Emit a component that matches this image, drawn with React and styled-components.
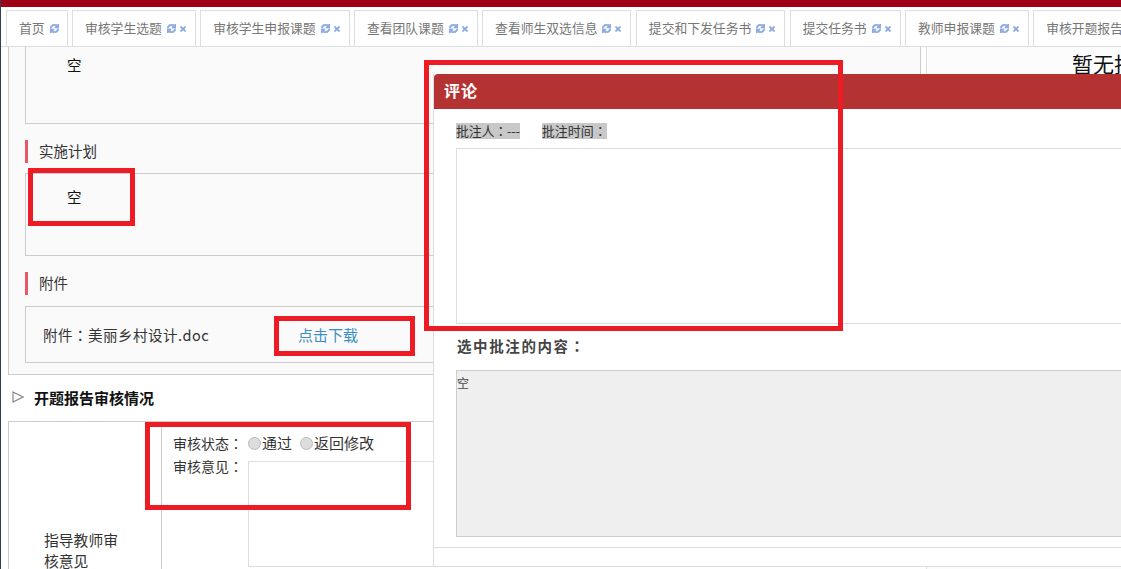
import React from "react";
import styled, { createGlobalStyle } from "styled-components";
import { FaSync, FaTimes } from "react-icons/fa";

const GlobalStyle = createGlobalStyle`
  html, body {
    margin: 0;
    padding: 0;
    background: #fff;
    overflow: hidden;
  }
  * {
    box-sizing: border-box;
  }
`;

const Page = styled.div`
  position: relative;
  width: 1121px;
  height: 569px;
  overflow: hidden;
  border-left: 1px solid #2f4050;
  background: #fff;
  color: #333;
  font-family: "Noto Sans CJK SC", "Noto Sans", sans-serif;
  font-size: 14.5px;
`;

const TopBar = styled.div`
  height: 7px;
  background: #a00016;
`;

const TabBar = styled.div`
  display: flex;
  gap: 4.4px;
  height: 40px;
  padding: 3px 0 0 5px;
  border-bottom: 1px solid #ddd;
  overflow: hidden;
`;

const Tab = styled.div`
  flex: 0 0 auto;
  display: flex;
  align-items: center;
  height: 37px;
  padding: 0 8px 3px 12px;
  border: 1px solid #ddd;
  border-bottom: none;
  background: #fff;
  color: #777;
  font-size: 12.8px;
  white-space: nowrap;
`;

const Refresh = styled(FaSync)`
  margin: 2px 0 0 5px;
  width: 9px;
  height: 9px;
  color: #8dabe3;
  stroke: currentColor;
  stroke-width: 50;
`;

const Close = styled(FaTimes)`
  margin: 2px 0 0 3px;
  width: 8px;
  height: 8px;
  color: #8dabe3;
  stroke: currentColor;
  stroke-width: 40;
`;

const Main = styled.div`
  display: flex;
  gap: 5px;
  width: 1500px;
`;

const LeftColumn = styled.div`
  flex: 0 0 920px;
`;

const DetailPanel = styled.div`
  margin-left: 7px;
  padding: 0 0 11px 16px;
  border-left: 1px solid #ccc;
  border-bottom: 1px solid #ccc;
  background: #fafafa;
`;

const ContentBox = styled.div`
  height: ${(props) => props.$height}px;
  padding: ${(props) => props.$top}px 0 0 41px;
  border: 1px solid #ccc;
  border-top: ${(props) => (props.$cut ? "none" : "1px solid #ccc")};
  color: #111;
  line-height: 20px;
`;

const SectionTitle = styled.div`
  height: 23px;
  margin: 16px 0 ${(props) => props.$gap}px;
  padding-left: 11px;
  border-left: 3px solid #e8566a;
  line-height: 21px;
  color: #333;
`;

const AttachmentBox = styled.div`
  display: flex;
  align-items: center;
  height: 57px;
  padding-left: 17px;
  border: 1px solid #ccc;
  color: #333;
`;

const FileName = styled.span`
  flex: 0 0 255px;
  letter-spacing: 0.5px;
`;

const DownloadLink = styled.a`
  color: #3b8fc4;
  text-decoration: none;
  font-size: 15px;
`;

const ReviewHeading = styled.div`
  display: flex;
  align-items: center;
  gap: 10px;
  height: 46px;
  margin-left: 11px;
  padding-bottom: 2px;
  color: #111;
  font-size: 15px;
  font-weight: 700;
`;

const ReviewTable = styled.div`
  display: flex;
  height: 257px;
  margin-left: 7px;
  border-top: 1px solid #ccc;
  border-left: 1px solid #ccc;
`;

const ReviewLabel = styled.div`
  flex: 0 0 153px;
  display: flex;
  align-items: center;
  padding-left: 35px;
  border-right: 1px solid #ccc;
  font-size: 14.8px;
  line-height: 21px;

  span {
    width: 76px;
  }
`;

const ReviewCell = styled.div`
  flex: 1;
  padding: 10px 0 0 11px;
`;

const FormRow = styled.div`
  display: flex;
  align-items: flex-start;
  line-height: 22px;
  min-height: 22px;
  margin-bottom: ${(props) => props.$gap || 0}px;
  font-size: 14px;
`;

const FieldLabel = styled.span`
  flex: 0 0 75px;
`;

const Colon = styled.span`
  font-family: "Noto Sans CJK TC", sans-serif;
`;

const Radio = styled.i`
  flex: 0 0 13px;
  width: 13px;
  height: 13px;
  margin: 5px 1px 0 0;
  border: 1px solid #bbb;
  border-radius: 50%;
  background: #ddd;
`;

const RadioText = styled.span`
  margin-right: 8px;
  font-size: 15px;
`;

const OpinionArea = styled.div`
  width: 600px;
  height: 106px;
  margin-top: 6px;
  border: 1px solid #ddd;
  background: #fff;
`;

const RightPanel = styled.div`
  flex: 0 0 400px;
  height: 522px;
  padding: 1px 0 0 145px;
  border-left: 1px solid #ddd;
  background: #fcfcfc;
  color: #111;
  font-size: 21px;
  line-height: 30px;
`;

const Modal = styled.div`
  position: absolute;
  left: 432px;
  top: 74px;
  width: 900px;
  height: 493px;
  border-left: 1px solid #ddd;
  border-bottom: 1px solid #ddd;
  background: #fff;
`;

const ModalHeader = styled.div`
  height: 35px;
  padding-left: 10px;
  border-radius: 4px 0 0 0;
  background: #b53232;
  color: #fff;
  font-size: 16px;
  font-weight: 700;
  letter-spacing: 1px;
  line-height: 33px;
`;

const ModalBody = styled.div`
  height: 439px;
  padding: 14px 0 0 22px;
  border-bottom: 1px solid #ddd;
`;

const MetaRow = styled.div`
  display: flex;
  gap: 22px;
  height: 25px;
  font-size: 13px;
  line-height: 16px;
  color: #333;

  > span {
    height: 16px;
    background: #c8c8c8;
  }

  > span:first-child {
    letter-spacing: -0.25px;
  }
`;

const CommentArea = styled.div`
  height: 176px;
  border: 1px solid #ddd;
`;

const SelectedTitle = styled.div`
  height: 46px;
  padding-left: 1px;
  color: #444;
  font-size: 14.5px;
  font-weight: 700;
  letter-spacing: 1.6px;
  line-height: 44px;
`;

const SelectedContent = styled.div`
  height: 167px;
  padding: 4px 0;
  border: 1px solid #ccc;
  background: #efefef;
  color: #444;
  font-size: 12px;
  line-height: 16px;
`;

const Mark = styled.div`
  position: absolute;
  left: ${(props) => props.$x}px;
  top: ${(props) => props.$y}px;
  width: ${(props) => props.$w}px;
  height: ${(props) => props.$h}px;
  border: 5px solid #ed1c24;
`;

const tabs = [
  { label: "首页", fixed: true },
  { label: "审核学生选题" },
  { label: "审核学生申报课题" },
  { label: "查看团队课题" },
  { label: "查看师生双选信息" },
  { label: "提交和下发任务书" },
  { label: "提交任务书" },
  { label: "教师申报课题" },
  { label: "审核开题报告" },
];

function ArrowIcon() {
  return (
    <svg width="12" height="12" viewBox="0 0 12 12">
      <path d="M1 1 L11 6 L1 11 Z" fill="#fff" stroke="#888" strokeWidth="1.2" />
    </svg>
  );
}

export default function App() {
  return (
    <Page>
      <GlobalStyle />
      <TopBar />
      <TabBar>
        {tabs.map((tab) => (
          <Tab key={tab.label}>
            {tab.label}
            <Refresh />
            {!tab.fixed && <Close />}
          </Tab>
        ))}
      </TabBar>
      <Main>
        <LeftColumn>
          <DetailPanel>
            <ContentBox $cut $height={77} $top={8}>
              空
            </ContentBox>
            <SectionTitle $gap={10}>实施计划</SectionTitle>
            <ContentBox $height={83} $top={13}>
              空
            </ContentBox>
            <SectionTitle $gap={11}>附件</SectionTitle>
            <AttachmentBox>
              <FileName>
                附件<Colon>：</Colon>美丽乡村设计.doc
              </FileName>
              <DownloadLink href="#">点击下载</DownloadLink>
            </AttachmentBox>
          </DetailPanel>
          <ReviewHeading>
            <ArrowIcon />
            开题报告审核情况
          </ReviewHeading>
          <ReviewTable>
            <ReviewLabel>
              <span>指导教师审核意见</span>
            </ReviewLabel>
            <ReviewCell>
              <FormRow $gap={1}>
                <FieldLabel>
                  审核状态<Colon>：</Colon>
                </FieldLabel>
                <Radio />
                <RadioText>通过</RadioText>
                <Radio />
                <RadioText>返回修改</RadioText>
              </FormRow>
              <FormRow>
                <FieldLabel>
                  审核意见<Colon>：</Colon>
                </FieldLabel>
                <OpinionArea />
              </FormRow>
            </ReviewCell>
          </ReviewTable>
        </LeftColumn>
        <RightPanel>暂无批注</RightPanel>
      </Main>

      <Modal>
        <ModalHeader>评论</ModalHeader>
        <ModalBody>
          <MetaRow>
            <span>
              批注人<Colon>：</Colon>---
            </span>
            <span>
              批注时间<Colon>：</Colon>
            </span>
          </MetaRow>
          <CommentArea />
          <SelectedTitle>
            选中批注的内容<Colon>：</Colon>
          </SelectedTitle>
          <SelectedContent>空</SelectedContent>
        </ModalBody>
      </Modal>

      <Mark $x={423} $y={60} $w={419} $h={271} />
      <Mark $x={27} $y={168} $w={107} $h={58} />
      <Mark $x={273} $y={316} $w={141} $h={40} />
      <Mark $x={144} $y={422} $w={266} $h={88} />
    </Page>
  );
}
